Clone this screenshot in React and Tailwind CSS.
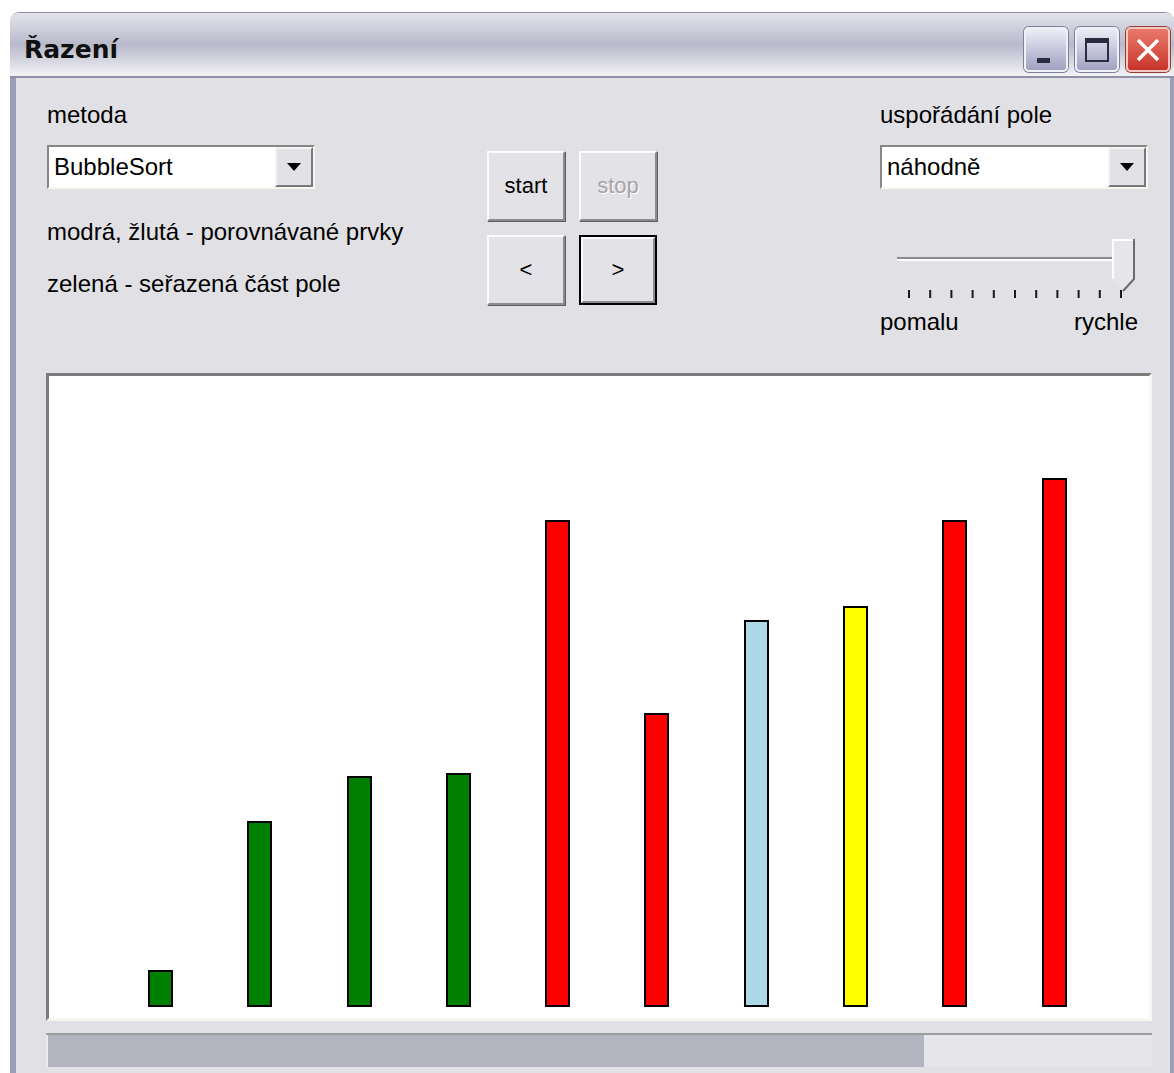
import React from "react";

const bars = [
  { h: 37, color: "bg-[#008000]" },
  { h: 186, color: "bg-[#008000]" },
  { h: 231, color: "bg-[#008000]" },
  { h: 234, color: "bg-[#008000]" },
  { h: 487, color: "bg-[#ff0000]" },
  { h: 294, color: "bg-[#ff0000]" },
  { h: 387, color: "bg-[#add8e6]" },
  { h: 401, color: "bg-[#ffff00]" },
  { h: 487, color: "bg-[#ff0000]" },
  { h: 529, color: "bg-[#ff0000]" },
];

const font = { fontFamily: '"Liberation Sans", Arial, sans-serif' };

function Combo({ value }) {
  return (
    <div className="flex h-[44px] w-[268px] border-2 border-t-[#868686] border-l-[#868686] border-b-[#f7f7f2] border-r-[#f7f7f2] bg-white">
      <div className="flex flex-1 items-center pl-[5px] text-[24px] leading-none text-black">{value}</div>
      <div className="flex w-[38px] items-center justify-center border-2 border-t-[#f4f4f4] border-l-[#f4f4f4] border-b-[#787878] border-r-[#787878] bg-[#e2e1e6]">
        <svg width="14" height="8" viewBox="0 0 14 8">
          <path d="M0 0h14L7 8z" fill="#000" />
        </svg>
      </div>
    </div>
  );
}

function Btn({ children, disabled, focused }) {
  const inner = (
    <div
      className={`flex h-full w-full items-center justify-center border-2 border-t-[#fbfbfb] border-l-[#fbfbfb] border-b-[#8c8c8c] border-r-[#8c8c8c] bg-[#e3e2e7] text-[22px] ${
        disabled ? "text-[#a5a5a8] [text-shadow:1px_1px_0_#ffffff]" : "text-black"
      }`}
    >
      {children}
    </div>
  );
  return focused ? (
    <div className="h-[70px] w-[78px] border-2 border-black">{inner}</div>
  ) : (
    <div className="h-[70px] w-[78px] shadow-[1px_1px_0_#5e5e5e]">{inner}</div>
  );
}

function Slider() {
  const ticks = Array.from({ length: 11 }, (_, i) => 29 + i * 21.2);
  return (
    <svg width="268" height="66" viewBox="0 0 268 66">
      <rect x="17" y="22" width="226" height="2" fill="#8c8c8c" />
      <rect x="17" y="24" width="226" height="2" fill="#ffffff" />
      {ticks.map((x) => (
        <rect key={x} x={x - 1} y="55" width="2" height="8" fill="#1a1a1a" />
      ))}
      <path d="M232 4h22v40l-11 12l-11-12z" fill="#e6e6ea" />
      <path d="M233 44V5h20" stroke="#ffffff" strokeWidth="2" fill="none" />
      <path d="M254 4v40l-11 12" stroke="#6c6c6c" strokeWidth="2" fill="none" />
    </svg>
  );
}

export default function App() {
  return (
    <div className="min-h-[1073px] overflow-hidden bg-white pl-[10px] pt-[12px]" style={font}>
      <div className="flex h-[1061px] w-[1164px] flex-col overflow-hidden rounded-t-[9px] border-t border-[#8b8ca6]">
        {/* title bar */}
        <div className="flex h-[65px] items-center justify-between border-b-2 border-[#8f90a6] bg-gradient-to-b from-[#e4e4ec] via-[#b8b9cb] to-[#f3f3f6] pl-[14px] pr-[4px] pt-[10px]">
          <div
            className="text-[25px] font-bold text-[#101010]"
            style={{ fontFamily: '"DejaVu Sans", Verdana, sans-serif' }}
          >
            Řazení
          </div>
          <div className="flex gap-[7px]">
            <div className="relative h-[45px] w-[44px] rounded-[5px] border-2 border-[#f0f0f6] bg-gradient-to-b from-[#eeeef8] to-[#9fa1c0] shadow-[0_0_0_1px_#7d7f9c]">
              <div className="absolute left-[11px] top-[29px] h-[5px] w-[13px] bg-[#2a2c40]" />
            </div>
            <div className="flex h-[45px] w-[44px] items-center justify-center rounded-[5px] border-2 border-[#f0f0f6] bg-gradient-to-b from-[#eeeef8] to-[#9fa1c0] shadow-[0_0_0_1px_#7d7f9c]">
              <div className="h-[24px] w-[24px] border-2 border-t-[5px] border-[#2a2c40]" />
            </div>
            <div className="flex h-[45px] w-[44px] items-center justify-center rounded-[5px] border-2 border-[#f3c8c0] bg-gradient-to-b from-[#e8786a] to-[#c8322a] shadow-[0_0_0_1px_#9a3a34]">
              <svg width="26" height="26" viewBox="0 0 26 26">
                <path d="M3 3l20 20M23 3L3 23" stroke="#ffffff" strokeWidth="3.5" />
              </svg>
            </div>
          </div>
        </div>

        {/* client area */}
        <div className="flex flex-1 flex-col border-l-[6px] border-r-[4px] border-l-[#9c9db6] border-r-[#9c9db6] bg-[#e1e0e5]">
          <div className="flex pl-[31px] pt-[24px] text-[24px] leading-[26px] text-black">
            <div className="flex w-[440px] flex-col">
              <div>metoda</div>
              <div className="mt-[17px] w-[270px]">
                <Combo value="BubbleSort" />
              </div>
              <div className="mt-[30px]">modrá, žlutá - porovnávané prvky</div>
              <div className="mt-[26px]">zelená - seřazená část pole</div>
            </div>

            <div className="mt-[49px] grid w-[170px] grid-cols-2 gap-[14px] self-start">
              <Btn>start</Btn>
              <Btn disabled>stop</Btn>
              <Btn>&lt;</Btn>
              <Btn focused>&gt;</Btn>
            </div>

            <div className="ml-[223px] flex w-[268px] flex-col">
              <div>uspořádání pole</div>
              <div className="mt-[17px]">
                <Combo value="náhodně" />
              </div>
              <div className="mt-[46px]">
                <Slider />
              </div>
              <div className="mt-[8px] flex justify-between pr-[10px]">
                <span>pomalu</span>
                <span>rychle</span>
              </div>
            </div>
          </div>

          {/* chart */}
          <div className="ml-[30px] mt-[38px] flex h-[648px] w-[1106px] items-end gap-[74.3px] border-[3px] border-t-[#7c7c7c] border-l-[#7c7c7c] border-b-[#f8f8f2] border-r-[#f8f8f2] bg-white pb-[11px] pl-[99px]">
            {bars.map((b, i) => (
              <div
                key={i}
                className={`w-[25px] border-2 border-black ${b.color}`}
                style={{ height: b.h }}
              />
            ))}
          </div>

          {/* horizontal scrollbar */}
          <div className="ml-[30px] mt-[12px] flex h-[34px] w-[1106px] border-t-2 border-[#9d9d9f] bg-[#e6e6ea]">
            <div className="h-full w-[878px] border-l-2 border-[#ececf0] bg-[#b2b4c0]" />
          </div>
        </div>
      </div>
    </div>
  );
}
